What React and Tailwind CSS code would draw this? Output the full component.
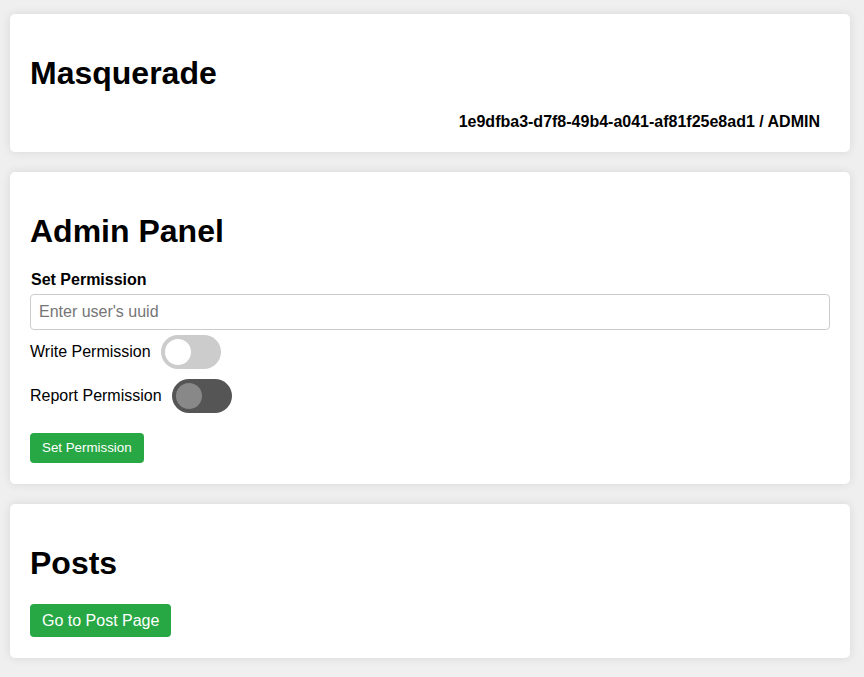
export default function App() {
  const font = { fontFamily: '"Liberation Sans", Arial, sans-serif' };
  return (
    <div className="min-h-[677px] bg-[#efefef] pt-[14px] pl-[10px] pb-[18px] text-black" style={font}>
      <div className="w-[840px] flex flex-col gap-[20px]">
        <div className="bg-white rounded-[5px] shadow-[0_0_10px_rgba(0,0,0,0.1)] px-[20px] pt-[20px] pb-[21px]">
          <h1 className="text-[32px] font-bold leading-[37px] my-[21px]">Masquerade</h1>
          <div className="text-right font-bold text-[16px] leading-[18px] pr-[10px]">
            1e9dfba3-d7f8-49b4-a041-af81f25e8ad1 / ADMIN
          </div>
        </div>

        <div className="bg-white rounded-[5px] shadow-[0_0_10px_rgba(0,0,0,0.1)] px-[20px] pt-[20px] pb-[21px]">
          <h1 className="text-[32px] font-bold leading-[37px] my-[21px]">Admin Panel</h1>
          <label className="block mt-[1px] font-bold text-[16px] leading-[18px] pl-[1px]">Set Permission</label>
          <input
            type="text"
            placeholder="Enter user's uuid"
            className="mt-[5px] w-full h-[36px] border border-[#ccc] rounded-[4px] px-[8px] text-[16px] placeholder:text-[#757575] outline-none"
            style={font}
          />
          <div className="mt-[5px] flex items-center h-[34px]">
            <span className="text-[16px]">Write Permission</span>
            <div className="ml-[10px] w-[60px] h-[34px] rounded-full bg-[#ccc] relative">
              <div className="absolute left-[4px] top-[4px] w-[26px] h-[26px] rounded-full bg-white"></div>
            </div>
          </div>
          <div className="mt-[10px] flex items-center h-[34px]">
            <span className="text-[16px]">Report Permission</span>
            <div className="ml-[10px] w-[60px] h-[34px] rounded-full bg-[#555] relative">
              <div className="absolute left-[4px] top-[4px] w-[26px] h-[26px] rounded-full bg-[#888]"></div>
            </div>
          </div>
          <button
            className="mt-[20px] h-[30px] px-[12px] bg-[#28a745] text-white text-[13.33px] rounded-[4px]"
            style={font}
          >
            Set Permission
          </button>
        </div>

        <div className="bg-white rounded-[5px] shadow-[0_0_10px_rgba(0,0,0,0.1)] px-[20px] pt-[20px] pb-[21px]">
          <h1 className="text-[32px] font-bold leading-[37px] my-[21px]">Posts</h1>
          <button
            className="mt-[1px] h-[33px] px-[12px] bg-[#28a745] text-white text-[16px] rounded-[4px]"
            style={font}
          >
            Go to Post Page
          </button>
        </div>
      </div>
    </div>
  );
}
